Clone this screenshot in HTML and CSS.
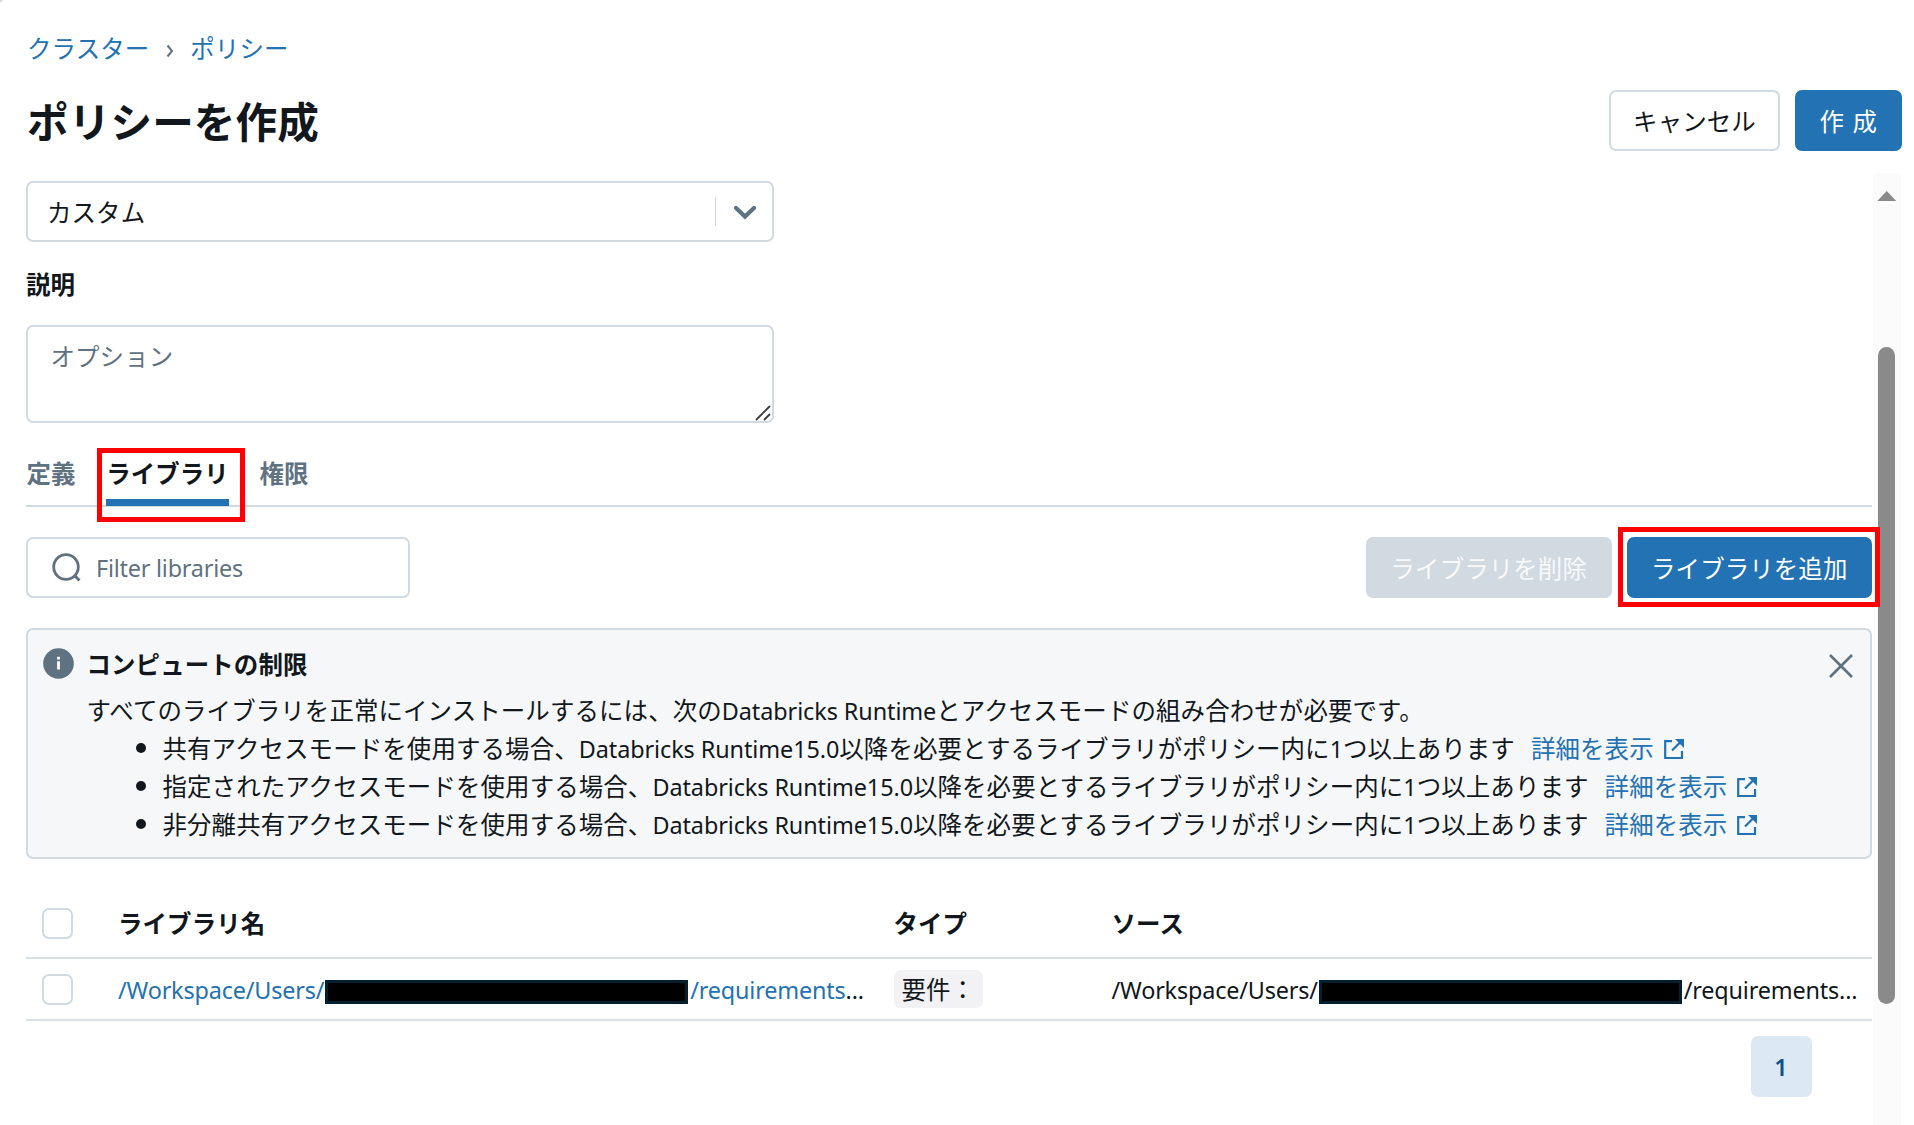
FILE: index.html
```html
<!DOCTYPE html>
<html lang="ja">
<head>
<meta charset="utf-8">
<title>ポリシーを作成</title>
<link rel="stylesheet" href="styles.css">
</head>
<body>
<svg width="0" height="0" class="defs"><symbol id="ext" viewBox="0 0 24 24"><path d="M11 4.2H4.2V21H21V14M20.5 4L11 13.5" fill="none" stroke="currentColor" stroke-width="2.2"/><path d="M14 2H23V11L20 8L17 5Z" fill="currentColor"/></symbol></svg>
<div class="corner"></div>
<header class="header">
  <nav class="crumbs"><a>クラスター</a><svg width="8" height="14" viewBox="0 0 8 14"><path d="M1.5 1.5L6 7L1.5 12.5" fill="none" stroke="#5f7281" stroke-width="2"/></svg><a>ポリシー</a></nav>
  <div class="titlebar">
    <h1>ポリシーを作成</h1>
    <div class="actions"><button class="btn">キャンセル</button><button class="btn primary create">作 成</button></div>
  </div>
</header>
<div class="scroller">
  <main class="content">
    <div class="select"><span>カスタム</span><i class="divider"></i><svg width="24" height="16" viewBox="0 0 24 16"><path d="M3 4L12 12.5L21 4" fill="none" stroke="#5f7281" stroke-width="4.2" stroke-linecap="round"/></svg></div>
    <label class="label">説明</label>
    <div class="textarea">オプション<svg class="grip" width="16" height="16" viewBox="0 0 16 16"><path d="M1 15L15 1M9 15L15 9" stroke="#3a3a3a" stroke-width="1.8"/></svg></div>
    <div class="tabs"><span class="tab">定義</span><span class="tab active">ライブラリ<i class="mark mark-tab"></i></span><span class="tab">権限</span></div>
    <div class="toolbar">
      <div class="search"><svg width="32" height="32" viewBox="0 0 32 32"><circle cx="15" cy="15" r="12.3" fill="none" stroke="#5f7281" stroke-width="2.8"/><path d="M23.5 23.5L28.5 28.5" stroke="#5f7281" stroke-width="3"/></svg><span class="lat">Filter libraries</span></div>
      <div class="tools"><button class="btn disabled">ライブラリを削除</button><div class="marked"><button class="btn primary">ライブラリを追加</button><i class="mark mark-add"></i></div></div>
    </div>
    <section class="alert">
      <svg class="info" width="31" height="31" viewBox="0 0 31 31"><circle cx="15.5" cy="15.5" r="15.3" fill="#5f7281"/><path d="M15.5 13.3V21.5M15.5 8.8V11.6" stroke="#fff" stroke-width="2.8"/></svg>
      <div class="alert-body">
        <h2>コンピュートの制限</h2>
        <p>すべてのライブラリを正常にインストールするには、次の<span class="lat">Databricks Runtime</span>とアクセスモードの組み合わせが必要です。</p>
        <ul>
          <li>共有アクセスモードを使用する場合、<span class="lat">Databricks Runtime15.0</span>以降を必要とするライブラリがポリシー内に<span class="lat">1</span>つ以上あります<a>詳細を表示<svg class="ext"><use href="#ext"/></svg></a></li>
          <li>指定されたアクセスモードを使用する場合、<span class="lat">Databricks Runtime15.0</span>以降を必要とするライブラリがポリシー内に<span class="lat">1</span>つ以上あります<a>詳細を表示<svg class="ext"><use href="#ext"/></svg></a></li>
          <li>非分離共有アクセスモードを使用する場合、<span class="lat">Databricks Runtime15.0</span>以降を必要とするライブラリがポリシー内に<span class="lat">1</span>つ以上あります<a>詳細を表示<svg class="ext"><use href="#ext"/></svg></a></li>
        </ul>
      </div>
      <svg class="close" width="26" height="26" viewBox="0 0 26 26"><path d="M2 2L24 24M24 2L2 24" stroke="#5f7281" stroke-width="2.6"/></svg>
    </section>
    <div class="table">
      <div class="row head"><span class="check"></span><b>ライブラリ名</b><b>タイプ</b><b>ソース</b></div>
      <div class="row"><span class="check"></span>
        <span class="path lat"><a>/Workspace/Users/</a><i class="redact"></i><a>/requirements</a>...</span>
        <span><span class="tag">要件：</span></span>
        <span class="path lat">/Workspace/Users/<i class="redact"></i>/requirements...</span></div>
    </div>
    <div class="pager"><span class="page lat">1</span></div>
  </main>
  <div class="track"><i class="arrow"></i><i class="thumb"></i></div>
</div>
</body>
</html>
```
FILE: styles.css
```css
* { box-sizing: border-box; }
body { margin: 0; width: 1914px; height: 1125px; overflow: hidden; position: relative; background: #fff; color: #11171c; font: 24.45px/38px "Noto Sans CJK JP", sans-serif; letter-spacing: 0.12px; display: flex; flex-direction: column; }
a { color: #2272b4; }
i { display: block; }
svg { flex: none; }
.defs { position: absolute; }
.corner { position: absolute; left: 0; top: 0; width: 3px; height: 3px; background: #d1d9e1; clip-path: polygon(0 0, 100% 0, 0 100%); }
.lat { font-family: "Noto Sans", sans-serif; font-size: 23.4px; line-height: 1; letter-spacing: -0.08px; }
.header { height: 173px; padding: 29px 12.5px 0 27px; }
.crumbs { display: flex; align-items: center; height: 38px; }
.crumbs svg { margin: 6px 16px 0 17px; }
.titlebar { display: flex; justify-content: space-between; align-items: center; height: 61px; margin-top: 23px; }
h1 { margin: 0; font-size: 41.6px; line-height: 61px; font-weight: 700; }
.actions { display: flex; gap: 15px; }
.btn { display: flex; align-items: center; justify-content: center; height: 61px; padding: 0 24px; border: 2px solid #d1d9e1; border-radius: 7px; background: #fff; color: #11171c; font: inherit; letter-spacing: inherit; white-space: nowrap; }
.actions .btn { width: 171px; }
.btn.primary { background: #2272b4; border-color: #2272b4; color: #fff; }
.actions .create { width: 106.5px; padding: 0; word-spacing: 3px; }
.scroller { display: flex; flex: 1; }
.content { width: 1872.5px; padding: 8px 0.5px 0 26px; }
.select { display: flex; align-items: center; width: 748px; height: 61px; border: 2px solid #d1d9e1; border-radius: 7px; padding: 0 15px 0 19px; }
.select span { flex: 1; }
.divider { width: 1.5px; height: 29px; background: #d1d9e1; margin-right: 17px; }
.label { display: block; font-weight: 700; margin-top: 23px; height: 38px; }
.textarea { position: relative; width: 748px; height: 98px; margin-top: 22px; border: 2px solid #d1d9e1; border-radius: 7px; padding: 10px 22.5px; color: #5f7281; }
.grip { position: absolute; right: 1px; bottom: 0; }
.tabs { display: flex; gap: 30.5px; height: 84px; padding: 31px 0 0 0.5px; border-bottom: 2px solid #d1d9e1; font-weight: 700; color: #5f7281; }
.tab.active { position: relative; height: 52px; color: #11171c; border-bottom: 7px solid #2272b4; }
.mark { position: absolute; border: 5px solid #f00; z-index: 2; }
.mark-tab { left: -9.5px; top: -6.5px; width: 148px; height: 74px; }
.toolbar { display: flex; justify-content: space-between; margin-top: 30px; }
.search { display: flex; align-items: center; gap: 13px; width: 384px; height: 61px; border: 2px solid #d1d9e1; border-radius: 7px; padding-left: 23px; color: #5f7281; }
.search .lat { padding-top: 3px; letter-spacing: -0.22px; }
.tools { display: flex; gap: 15px; }
.tools .btn { width: 245.5px; padding: 0; }
.btn.disabled { background: #d1d9e1; color: #f8fafb; }
.marked { position: relative; }
.mark-add { left: -8.5px; top: -10.5px; width: 262px; height: 80px; }
.alert { display: flex; height: 231px; margin-top: 30px; padding: 15px 16.5px 0 14.5px; border: 2px solid #d1d9e1; border-radius: 7px; background: #f6f7f9; }
.info { margin-top: 3px; }
.alert-body { flex: 1; margin-left: 13px; white-space: nowrap; }
h2 { margin: 0; font-size: 24.45px; line-height: 38px; font-weight: 700; }
p { margin: 8px 0 0; height: 38px; }
ul { margin: 0; padding: 0 0 0 76px; list-style: none; }
li { position: relative; height: 38px; }
li::before { content: ""; position: absolute; left: -27px; top: 13.5px; width: 10px; height: 10px; border-radius: 50%; background: #11171c; }
li a { margin-left: 16px; }
.ext { width: 24px; height: 24px; margin-left: 7px; vertical-align: -3px; }
.close { margin-top: 8px; }
.table { margin-top: 32px; }
.row { display: grid; grid-template-columns: 92px 775.5px 218px 1fr; align-items: center; height: 62px; border-bottom: 2px solid #d8e0e6; white-space: nowrap; }
.row.head { height: 68px; }
.row.head > * { position: relative; top: -1px; }
.check { width: 31px; height: 31px; margin-left: 15.5px; border: 2px solid #d1d9e1; border-radius: 7px; }
.path { display: flex; align-items: center; padding-top: 4px; letter-spacing: -0.17px; }
.redact { width: 363px; height: 24px; margin: 1px 2px 0 1px; border: 3px solid #04202f; background: #000; }
.tag { display: inline-block; height: 38px; padding: 0 8px; border-radius: 7px; background: #f2f2f4; }
.pager { display: flex; justify-content: flex-end; padding: 15px 60.5px 0 0; }
.page { display: flex; width: 61px; height: 61px; padding-top: 3px; align-items: center; justify-content: center; border-radius: 7px; background: #dce8f3; color: #0e538b; font-weight: 600; }
.track { width: 28.5px; background: #fbfbfb; display: flex; flex-direction: column; align-items: center; padding-top: 18px; }
.arrow { width: 19px; height: 10px; background: #8a8a8a; clip-path: polygon(50% 0, 100% 100%, 0 100%); }
.thumb { width: 17px; height: 657px; margin-top: 146px; border-radius: 9px; background: #8a8a8a; }
```
